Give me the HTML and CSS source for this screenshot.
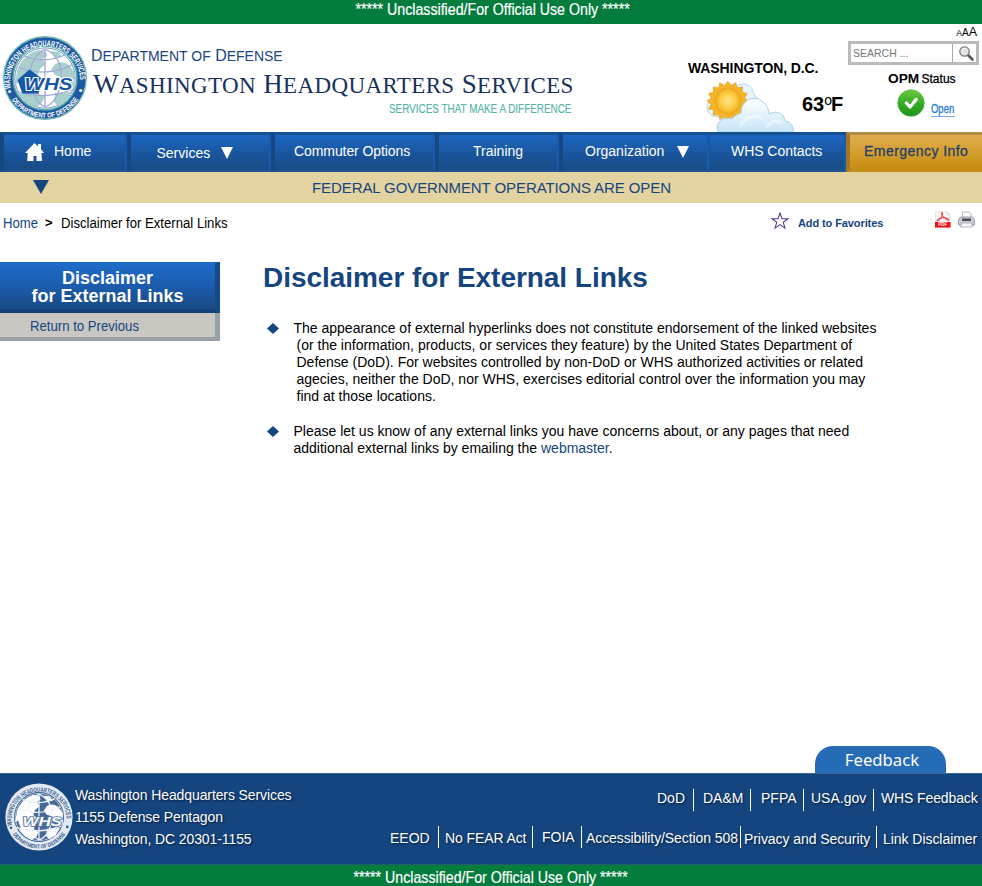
FILE: index.html
```html
<!DOCTYPE html>
<html lang="en">
<head>
<meta charset="utf-8">
<title>Disclaimer for External Links</title>
<link rel="stylesheet" href="styles.css">
</head>
<body>
<svg width="0" height="0" class="defs" aria-hidden="true">
  <defs>
    <path id="ringTop" d="M8.900 53.500A35 35 0 1 1 77.900 50"/>
    <path id="ringBottom" d="M7.400 60.500A39.500 39.500 0 0 0 78.600 60.500"/>
    <g id="land">
      <path d="M15 36Q19 24 29 18L36 15 44 17 45 21 40 24 44 29 38 34 36 40 31 41 29 46 21 44 13 50Z"/>
      <path d="M49 16L57 17 60 22 53 23Z"/>
      <path d="M53 29Q60 25 67 30L73 38 73 53 65 50 59 42 53 40 49 35Z"/>
      <path d="M20 57L34 57 43 62 39 69 34 72Q24 68 18 59Z"/>
      <path d="M53 58L69 57 64 66 56 71 52 67Z"/>
    </g>
    <g id="grid">
      <path d="M43 14V72M43 14C30 21 27 35 28 45S34 68 43 72M43 14C58 21 60 35 59 45S54 68 43 72M16 32Q43 43 70 30M14 56Q43 66 72 54M22 21Q43 29 63 20"/>
    </g>
  </defs>
</svg>

<div class="classbar top"><span class="narrow">***** Unclassified/For Official Use Only *****</span></div>

<header class="header">
  <svg class="seal" viewBox="0 0 86 86">
    <circle cx="43" cy="43" r="41.300" fill="#1d58a4" stroke="#78bcb4" stroke-width="1.400"/>
    <circle cx="43" cy="43" r="32" fill="#fff" stroke="#55aaa4" stroke-width="1.600"/>
    <circle cx="43" cy="43" r="30.200" fill="#fff" stroke="#4b7db9" stroke-width=".8"/>
    <use href="#land" fill="#a9d0cd"/>
    <use href="#grid" fill="none" stroke="#a2a8d8" stroke-width="1.300"/>
    <text class="ring-text"><textPath href="#ringTop" textLength="116" lengthAdjust="spacingAndGlyphs">WASHINGTON HEADQUARTERS SERVICES</textPath></text>
    <text class="ring-text low"><textPath href="#ringBottom" startOffset="5" textLength="79" lengthAdjust="spacingAndGlyphs">DEPARTMENT OF DEFENSE</textPath></text>
    <circle cx="7.600" cy="56.500" r="1.500" fill="#fff"/><circle cx="78.700" cy="55.500" r="1.500" fill="#fff"/>
    <path d="M15.500 45L27.500 34.500 40.500 44 36.500 58.500H20.500Z" fill="#1557a6"/>
    <text class="seal-word" x="22.500" y="54.800" textLength="48" lengthAdjust="spacingAndGlyphs">WHS</text>
  </svg>
  <div class="titles">
    <div class="dept">D<span>EPARTMENT OF</span> D<span>EFENSE</span></div>
    <div class="org">W<span>ASHINGTON</span> H<span>EADQUARTERS</span> S<span>ERVICES</span></div>
    <div class="tagline">SERVICES THAT MAKE A DIFFERENCE</div>
  </div>
  <div class="weather">
    <div class="city">WASHINGTON, D.C.</div>
    <div class="conditions">
      <svg class="sky" viewBox="0 0 90 52">
        <defs>
          <radialGradient id="sun"><stop offset="0" stop-color="#ffe88a"/><stop offset=".65" stop-color="#fbc93c"/><stop offset="1" stop-color="#f0a91c"/></radialGradient>
          <linearGradient id="cloud" x2="0" y2="1"><stop offset="0" stop-color="#fff"/><stop offset="1" stop-color="#c6e4f8"/></linearGradient>
        </defs>
        <path d="M8 36C0 32 0 22 8 20L32 6C38 1 48 5 49 15C54 18 56 24 53 30L30 40Z" fill="#e8f4fc" stroke="#b4d6ec"/>
        <path d="M23.500 1.500l3.600 4.600 5-3 1.500 5.700 5.900-.8-.8 5.900 5.700 1.500-3 5 4.600 3.600-4.600 3.600 3 5-5.700 1.500.8 5.900-5.900-.8-1.500 5.700-5-3-3.600 4.600-3.600-4.600-5 3-1.500-5.700-5.900.8.8-5.900-5.700-1.500 3-5-4.600-3.600 4.600-3.600-3-5 5.700-1.500-.8-5.900 5.900.8 1.500-5.700 5 3z" transform="translate(1 0) scale(.93 .88)" fill="#f5b529" stroke="#e29c20" stroke-width=".7"/>
        <circle cx="23" cy="21" r="13" fill="url(#sun)" stroke="#e9a51d"/>
        <path d="M13 52C10 43 17 36 27 39C29 36 33 34 36 33C36 20 49 14 58 22C62 25 64 29 64 34C72 30 79 33 80 41C86 42 89 47 88 52Z" fill="url(#cloud)" stroke="#a9d1ec"/>
        <path d="M35 47C38 39 48 34 57 38M62 48C64 42 71 39 76 43" fill="none" stroke="#fff" stroke-width="3" opacity=".5"/>
      </svg>
      <span class="temp">63<sup>o</sup>F</span>
    </div>
  </div>
  <div class="tools">
    <div class="sizes"><span class="s1">A</span><span class="s2">A</span><span class="s3">A</span></div>
    <div class="search">
      <span class="field">SEARCH ...</span>
      <span class="go"><svg viewBox="0 0 24 18"><path d="M15 11l4.500 4.500" stroke="#555" stroke-width="2.600" stroke-linecap="round"/><circle cx="11.500" cy="7.500" r="4.700" fill="#e4e4e4" stroke="#777" stroke-width="1.300"/><path d="M9 7A2.700 2.700 0 0 1 11.500 4.800" stroke="#fff" fill="none"/></svg></span>
    </div>
    <div class="opm"><b>OPM</b> <span>Status</span></div>
    <div class="opm-state">
      <svg viewBox="0 0 28 28"><defs><linearGradient id="ok" x2="0" y2="1"><stop offset="0" stop-color="#6cc83f"/><stop offset=".55" stop-color="#31aa22"/><stop offset="1" stop-color="#20921c"/></linearGradient></defs><circle cx="14" cy="14" r="13.300" fill="url(#ok)" stroke="#58b345" stroke-width=".6"/><path d="M9.300 14l3.700 4 6.200-7.600" fill="none" stroke="#fff" stroke-width="3.300" stroke-linecap="round" stroke-linejoin="round"/></svg>
      <a>Open</a>
    </div>
  </div>
</header>

<nav class="nav">
  <a class="home"><svg viewBox="0 0 19 18"><path d="M9.500 0L13 3.400V1h3v5.300L19 10h-2.500L17 18h-5.500v-5h-3v5H2.200L2.700 10H0Z" fill="#fff"/></svg><span>Home</span></a>
  <a class="services"><span>Services</span><i></i></a>
  <a class="commuter"><span>Commuter Options</span></a>
  <a class="training"><span>Training</span></a>
  <a class="organization"><span>Organization</span><i></i></a>
  <a class="contacts"><span>WHS Contacts</span></a>
  <a class="emergency"><span>Emergency Info</span></a>
</nav>

<div class="alert"><i></i><span>FEDERAL GOVERNMENT OPERATIONS ARE OPEN</span></div>

<div class="crumbs">
  <div class="trail"><a>Home</a><b>&gt;</b><span>Disclaimer for External Links</span></div>
  <div class="actions">
    <svg class="star" viewBox="0 0 18 17"><path d="M9 1l2 5.800h6l-4.800 3.500 1.800 5.800-5-3.500-5 3.500 1.800-5.800L1 6.800h6z" fill="#fff" stroke="#5b3a94" stroke-width="1.100"/></svg>
    <a>Add to Favorites</a>
    <svg class="pdf" viewBox="0 0 16 17"><path d="M.5.500h11.500l3 3v13H.5z" fill="#f4f4f4" stroke="#ddd" stroke-width=".6"/><path d="M12 .5v3h3" fill="#ddd"/><path d="M7 1.500c1.200 0 .6 3-1 5.500S2.500 10.500 2 9.500s4-3 7-2.800 5.500 1.500 5 2.300-3.500-.5-5.500-3S6 1.500 7 1.500z" fill="none" stroke="#ee2a2a"/><path d="M0 11h15.500v5.500H0z" fill="#f20d0d"/><text x="7.800" y="15.300">PDF</text></svg>
    <svg class="print" viewBox="0 0 17 17"><path d="M4.500 7V1h6.700l1.800 2v4" fill="#fff" stroke="#aaa" stroke-width=".8"/><path d="M2.500 6h12l2 3v5H.5V9z" fill="#c9cdd6" stroke="#8d919d" stroke-width=".8"/><path d="M4 7.500h9v2.500H4z" fill="#4a4d58"/><path d="M3.500 12h10l1 4h-12z" fill="#f8f8fb" stroke="#999eae" stroke-width=".7"/></svg>
  </div>
</div>

<div class="body">
  <aside class="side">
    <div class="side-title">Disclaimer<br>for External Links</div>
    <div class="side-link"><a>Return to Previous</a></div>
  </aside>
  <main class="content">
    <h1>Disclaimer for External Links</h1>
    <ul>
      <li><svg viewBox="0 0 12 11"><path d="M6 0l6 5.500L6 11 0 5.500z"/></svg>
        <p class="hang">The appearance of external hyperlinks does not constitute endorsement of the linked websites<br>(or the information, products, or services they feature) by the United States Department of<br>Defense (DoD). For websites controlled by non-DoD or WHS authorized activities or related<br>agecies, neither the DoD, nor WHS, exercises editorial control over the information you may<br>find at those locations.</p></li>
      <li><svg viewBox="0 0 12 11"><path d="M6 0l6 5.500L6 11 0 5.500z"/></svg>
        <p>Please let us know of any external links you have concerns about, or any pages that need<br>additional external links by emailing the <a>webmaster</a>.</p></li>
    </ul>
  </main>
</div>

<div class="feedback"><a>Feedback</a></div>

<footer class="footer">
  <svg class="seal-small" viewBox="0 0 86 86">
    <circle cx="43" cy="43" r="42.500" fill="#e3e9f2"/>
    <circle cx="43" cy="43" r="31.500" fill="#1f4d87"/>
    <circle cx="43" cy="43" r="30" fill="#47699a" stroke="#fff" stroke-width=".8"/>
    <use href="#land" fill="#fff"/>
    <use href="#grid" fill="none" stroke="#eef2f8" stroke-width="1.600"/>
    <text class="ring-text dark"><textPath href="#ringTop" textLength="116" lengthAdjust="spacingAndGlyphs">WASHINGTON HEADQUARTERS SERVICES</textPath></text>
    <text class="ring-text dark low"><textPath href="#ringBottom" startOffset="5" textLength="79" lengthAdjust="spacingAndGlyphs">DEPARTMENT OF DEFENSE</textPath></text>
    <circle cx="7.600" cy="56.500" r="1.600" fill="#2c568d"/><circle cx="78.700" cy="55.500" r="1.600" fill="#2c568d"/>
    <path d="M15.500 45L27.500 34.500 40.500 44 36.500 58.500H20.500Z" fill="#fff"/>
    <text class="seal-word pale" x="22" y="54.800" textLength="50" lengthAdjust="spacingAndGlyphs">WHS</text>
  </svg>
  <address>Washington Headquarters Services<br>1155 Defense Pentagon<br>Washington, DC 20301-1155</address>
  <div class="links">
    <div class="row first">
      <a class="dod">DoD</a><a class="dam">DA&amp;M</a><a class="pfpa">PFPA</a><a class="usa">USA.gov</a><a class="whsf">WHS Feedback</a>
    </div>
    <div class="row second">
      <a class="eeod">EEOD</a><a class="fear">No FEAR Act</a><a class="foia">FOIA</a><a class="access">Accessibility/Section 508</a><a class="privacy">Privacy and Security</a><a class="disc">Link Disclaimer</a>
    </div>
  </div>
</footer>
<div class="classbar bottom"><span class="narrow">***** Unclassified/For Official Use Only *****</span></div>
</body>
</html>
```
FILE: styles.css
```css
* { box-sizing: border-box; }
body { margin: 0; width: 982px; height: 886px; background: #fff; color: #000; font: 14px/17px "Liberation Sans", Arial, sans-serif; display: flex; flex-direction: column; overflow: hidden; white-space: nowrap; }
.defs { display: block; flex: none; position: absolute; }
svg { display: block; flex: none; }
a { color: #15457f; }

.classbar { background: #037c3e; color: #fff; font-size: 16px; text-align: center; flex: none; }
.classbar.top { height: 24px; line-height: 20px; padding-left: 4px; }
.classbar.bottom { height: 22px; line-height: 26px; border-top: 1px solid #225f6a; }
.narrow { display: inline-block; transform: scaleX(.887); -webkit-text-stroke: .2px #fff; }

.header { display: grid; grid-template-columns: 91px 597px 160px 134px; height: 108px; flex: none; }
.seal { width: 86px; height: 86px; margin: 11px 0 0 2px; }
.ring-text { font: bold 8.300px "Liberation Sans", sans-serif; fill: #fff; }
.ring-text.low { font-size: 7.200px; }
.ring-text.dark { fill: #3a5f94; }
.seal-word { font: italic bold 16.500px "Liberation Sans", sans-serif; fill: #1557a6; stroke: #fff; stroke-width: 2px; paint-order: stroke; }
.seal-word.pale { fill: #fff; stroke: #54739f; stroke-width: 2px; }
.titles { color: #1a4580; }
.dept { font-size: 16px; line-height: 20px; margin-top: 22px; }
.dept span { font-size: 14px; }
.org { font: 27px/34px "Liberation Serif", serif; color: #17315b; letter-spacing: .38px; margin: 1px 0 0 2px; }
.org span { font-size: 23px; }
.tagline { font-size: 12px; line-height: 16px; color: #55b4a6; margin: -2px 0 0 298px; transform: scaleX(.825); transform-origin: left; -webkit-text-stroke: .15px #55b4a6; }
.city { font-size: 14px; font-weight: bold; letter-spacing: -.1px; margin-top: 36px; }
.conditions { display: flex; margin-top: 3px; }
.sky { width: 90px; height: 52px; margin-left: 17px; }
.temp { font-size: 20px; font-weight: bold; line-height: 24px; margin: 12px 0 0 7px; }
.temp sup { font-size: 14px; font-weight: normal; line-height: 0; vertical-align: 6px; letter-spacing: -1px; }
.tools { display: flex; flex-direction: column; }
.sizes { text-align: right; padding-right: 5px; height: 16px; line-height: 14px; }
.s1 { font-size: 8.500px; } .s2 { font-size: 10px; } .s3 { font-size: 12.500px; }
.search { display: flex; width: 131px; height: 24px; margin-top: 1px; border: 3px solid #bbb; }
.field { flex: 1; font-size: 10.500px; line-height: 19px; color: #777; padding-left: 2px; }
.go { width: 24px; border-left: 1px solid #aaa; }
.go svg { width: 24px; height: 18px; }
.opm { margin: 6px 0 0 40px; font-size: 12px; line-height: 16px; }
.opm b { font-size: 13.700px; } .opm span { -webkit-text-stroke: .3px #000; margin-left: -1px; }
.opm-state { display: flex; margin: 2px 0 0 49px; }
.opm-state svg { width: 28px; height: 28px; }
.opm-state a { color: #277bd4; font-size: 12px; line-height: 13px; height: 14px; margin: 14px 0 0 6px; width: 30px; transform: scaleX(.79); transform-origin: left; border-bottom: 1px solid #72abe4; -webkit-text-stroke: .3px #277bd4; }

.nav { display: flex; height: 40px; flex: none; background: #174f8e; }
.nav a { display: flex; color: #fff; line-height: 18px; padding-top: 7px; border-top: 3px solid #155293; border-bottom: 2px solid #215394; border-left: 4px solid #164780; background: linear-gradient(#1d67c1, #195399 60%, #194b84); box-shadow: inset -2px 0 1px #1a5bac; }
.nav i { width: 0; border: 6.500px solid transparent; border-top: 12px solid #fff; border-bottom: 0; height: 12px; margin: 5px 0 0 12px; }
.nav .home { width: 127px; padding-left: 21px; }
.home svg { width: 19px; height: 18px; margin: 1px 10px 0 0; }
.nav .services { width: 144px; padding: 9px 0 0 25.500px; }
.services i { margin: 3px 0 0 11px; }
.nav .commuter { width: 164px; padding-left: 19px; letter-spacing: -.08px; }
.nav .training { width: 124px; padding-left: 34px; }
.nav .organization { width: 150px; padding-left: 22px; }
.nav .contacts { width: 137px; padding-left: 21px; border-left: 1px solid #1a5299; letter-spacing: -.05px; }
.nav .organization i { margin-top: 4px; margin-left: 13px; }
.nav .emergency { width: 136px; padding-left: 14px; color: #243f67; letter-spacing: .45px; -webkit-text-stroke: .3px #243f67; border-color: #b28e45 transparent #c78e19 #a37627; background: linear-gradient(#dfae50, #d49d2b 55%, #c58a0f); box-shadow: none; }

.alert { height: 31px; flex: none; display: flex; background: #e3d3a1; color: #15457f; font-size: 15px; line-height: 31px; }
.alert i { width: 16px; height: 14px; border: 8px solid transparent; border-top: 14px solid #15457f; border-bottom: 0; margin: 8px 0 0 33px; }
.alert span { margin-left: 263px; letter-spacing: -.09px; }

.crumbs { display: flex; justify-content: space-between; height: 59px; flex: none; padding: 11px 7px 0 3px; }
.trail { display: flex; height: 18px; line-height: 18px; }
.trail a { width: 42px; transform: scaleX(.94); transform-origin: left; }
.trail b { font-size: 13px; width: 15.500px; }
.trail span { transform: scaleX(.939); transform-origin: left; }
.actions { display: flex; }
.actions a { font-size: 11px; font-weight: bold; letter-spacing: -.1px; line-height: 14px; width: 137px; margin-top: 2px; }
.star { width: 18px; height: 17px; margin: -2px 9px 0 0; }
.pdf { width: 16px; height: 17px; margin: -3px 7px 0 0; }
.pdf text { font: bold 4.500px "Liberation Sans", sans-serif; fill: #fff; text-anchor: middle; }
.print { width: 17px; height: 17px; margin-top: -3px; }

.body { display: flex; flex: 1; align-items: flex-start; }
.side { width: 220px; }
.side-title { height: 51px; color: #fff; font-size: 18px; font-weight: bold; line-height: 18px; text-align: center; padding: 6px 0 0; background: linear-gradient(#1e6cc9, #1c5cae 50%, #194a82); border: solid #144079; border-width: 1px 5px 4px 0; border-top-color: #1d64b9; border-right-color: #15498a; }
.side-link { height: 28px; background: #c8c7c2; border: solid #98a1a9; border-width: 0 5px 4px 0; line-height: 26px; padding-left: 30px; }
.side-link a { display: inline-block; transform: scaleX(.94); transform-origin: left; }
.content { margin-left: 43px; }
h1 { margin: 0; font-size: 28px; line-height: 32px; letter-spacing: -.04px; color: #15457f; }
ul { list-style: none; margin: 26px 0 0; padding: 0; }
li { display: flex; margin-bottom: 18px; }
li svg { width: 12px; height: 11px; margin: 3px 14.500px 0 4px; fill: #15457f; }
li p { margin: 0; }
.hang { padding-left: 3px; text-indent: -3px; }

.feedback { flex: none; height: 27px; display: flex; padding-left: 815px; }
.feedback a { width: 131px; background: #266bb5; color: #fff; border-radius: 18px 18px 0 0; text-align: center; padding-left: 3px; font: 16.700px/27px "Noto Sans", sans-serif; }
.footer { height: 91px; flex: none; display: flex; background: #15457f; color: #fff; border-top: 1px solid #3b6792; text-shadow: 1px 1px 2px #001a3a; }
.footer svg { text-shadow: none; }
.footer a { color: #fff; }
.seal-small { width: 68px; height: 68px; margin: 9px 0 0 5px; }
address { font-style: normal; line-height: 22px; letter-spacing: -.1px; margin: 10px 0 0 2px; }
.links { flex: 1; }
.row { display: flex; justify-content: flex-end; padding-right: 2px; }
.row a { height: 22px; line-height: 18px; border-right: 1px solid #fff; }
.row a:last-child { border-right: 0; }
.first { margin-top: 15px; }
.second { margin-top: 15px; }
.second a { padding-top: 3px; }
.dod { width: 37px; } .dam { width: 57px; padding-left: 9px; } .pfpa { width: 53px; padding-left: 10px; }
.usa { width: 70px; padding-left: 7px; } .whsf { width: 106px; padding-left: 7px; letter-spacing: -.12px; }
.eeod { width: 49px; } .fear { width: 94px; padding-left: 6px; letter-spacing: -.1px; } .second .foia { width: 49px; padding: 2px 0 0 9px; }
.access { width: 159px; padding-left: 4px; letter-spacing: -.09px; } .second .privacy { width: 136px; padding: 4px 0 0 3px; letter-spacing: -.07px; } .second .disc { width: 103px; padding: 4px 0 0 6px; letter-spacing: -.05px; }
```
